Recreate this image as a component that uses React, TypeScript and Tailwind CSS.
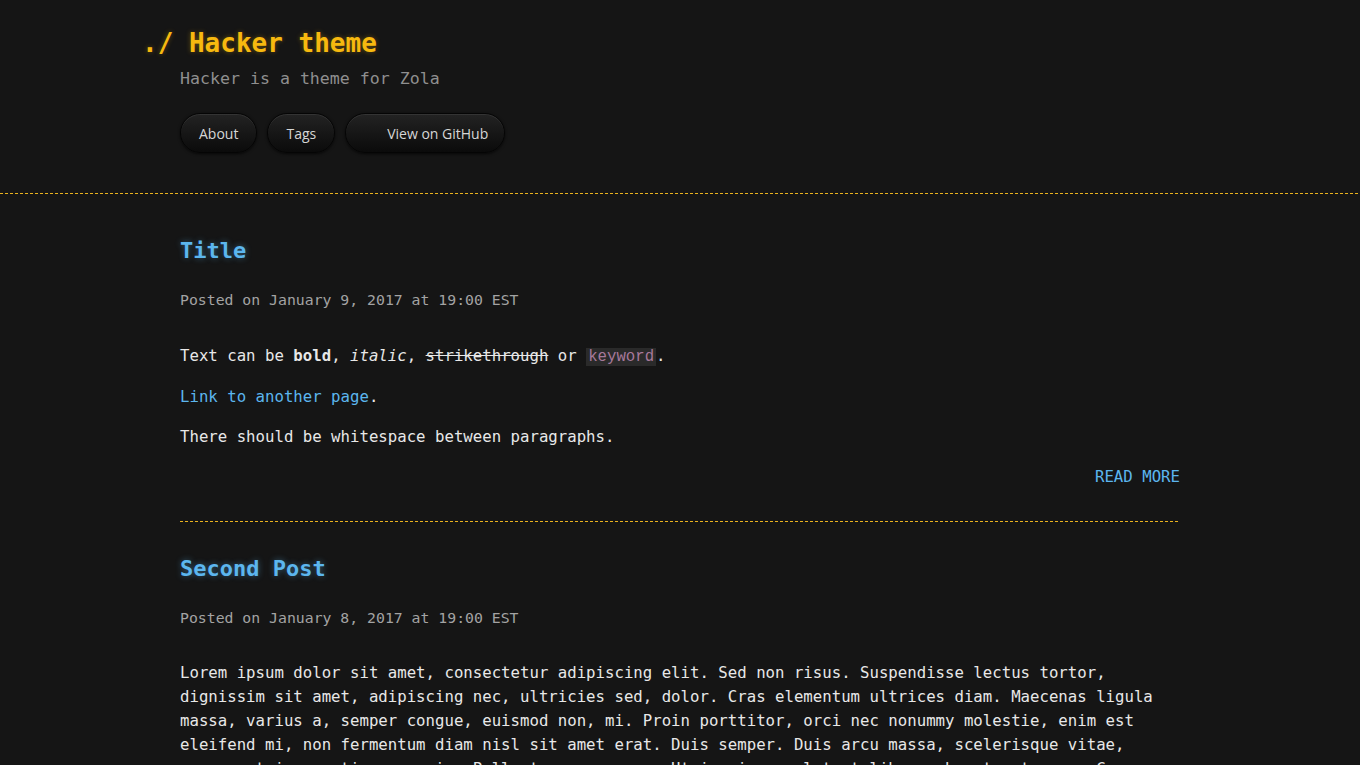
const mono = "font-['DejaVu_Sans_Mono','Liberation_Mono',monospace]";

const navLinks = [
  { label: 'About', pad: 'pl-[18px] pr-[18px]' },
  { label: 'Tags', pad: 'pl-[18px] pr-[18px]' },
  { label: 'View on GitHub', pad: 'pl-[41px] pr-[16px]' },
];

const lorem =
  'Lorem ipsum dolor sit amet, consectetur adipiscing elit. Sed non risus. Suspendisse lectus tortor, dignissim sit amet, adipiscing nec, ultricies sed, dolor. Cras elementum ultrices diam. Maecenas ligula massa, varius a, semper congue, euismod non, mi. Proin porttitor, orci nec nonummy molestie, enim est eleifend mi, non fermentum diam nisl sit amet erat. Duis semper. Duis arcu massa, scelerisque vitae, consequat in, pretium a, enim. Pellentesque congue. Ut in risus volutpat libero pharetra tempor. Cras vestibulum bibendum augue. Praesent egestas leo in pede. Praesent blandit odio eu enim.';

function Dashed() {
  return <div className="h-px w-full bg-[repeating-linear-gradient(to_right,#eab21e_0px,#eab21e_3px,transparent_3px,transparent_5px)]" />;
}

function PostTitle({ children }: { children: React.ReactNode }) {
  return (
    <h2 className="text-[22px] leading-[30px] font-bold text-[#5cb6ee] [text-shadow:0_0_6px_rgba(92,182,238,0.45)]">
      {children}
    </h2>
  );
}

function Meta({ children }: { children: React.ReactNode }) {
  return <p className="mt-[22px] text-[14.8px] leading-[24px] text-[#a3a3a3]">{children}</p>;
}

export default function App() {
  return (
    <div className={`min-h-screen bg-[#151515] text-[#e8e8e8] ${mono}`}>
      <header>
        <div className="mx-auto w-[1000px] pt-[26px] pb-[40px]">
          <h1 className="-ml-[38px] text-[26px] leading-[34px] font-bold text-[#f7b90f] [text-shadow:0_0_5px_rgba(247,185,15,0.35)]">
            ./ Hacker theme
          </h1>
          <p className="mt-[7px] text-[16.6px] leading-[24px] text-[#8f8f8f]">Hacker is a theme for Zola</p>
          <nav className="mt-[22px] flex gap-[10px]">
            {navLinks.map((l) => (
              <a
                key={l.label}
                className={`flex h-[40px] items-center rounded-full border border-[#050505] bg-gradient-to-b from-[#232323] to-[#0b0b0b] ${l.pad} font-['Open_Sans',sans-serif] text-[14px] text-[#d6d6d6] shadow-[inset_0_1px_0_rgba(255,255,255,0.08),0_1px_3px_rgba(0,0,0,0.7)]`}
              >
                {l.label}
              </a>
            ))}
          </nav>
        </div>
        <Dashed />
      </header>

      <main className="mx-auto w-[1000px]">
        <article className="pt-[42px] pb-[32px]">
          <PostTitle>Title</PostTitle>
          <Meta>Posted on January 9, 2017 at 19:00 EST</Meta>
          <div className="mt-[32px] flex flex-col gap-[16px] text-[15.7px] leading-[24px]">
            <p>
              Text can be <strong className="font-bold">bold</strong>, <em className="italic">italic</em>,{' '}
              <s>strikethrough</s> or{' '}
              <code className="bg-[#2a2a2a] px-[2px] text-[#a7799b]">keyword</code>.
            </p>
            <p>
              <a className="text-[#5cb6ee]">Link to another page</a>.
            </p>
            <p>There should be whitespace between paragraphs.</p>
            <p className="text-right">
              <a className="text-[#5cb6ee]">READ MORE</a>
            </p>
          </div>
        </article>
        <Dashed />

        <article className="pt-[32px] pb-[32px]">
          <PostTitle>Second Post</PostTitle>
          <Meta>Posted on January 8, 2017 at 19:00 EST</Meta>
          <p className="mt-[31px] text-[15.7px] leading-[24px]">{lorem}</p>
        </article>
      </main>
    </div>
  );
}
